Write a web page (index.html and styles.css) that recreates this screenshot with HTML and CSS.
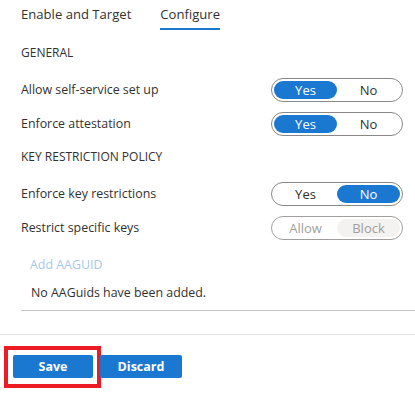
FILE: index.html
```html
<!DOCTYPE html>
<html>
<head>
<meta charset="utf-8">
<link rel="stylesheet" href="styles.css">
</head>
<body>
<div class="page">
  <div class="tabs">
    <div class="tab">Enable and Target</div>
    <div class="tab active">Configure</div>
  </div>
  <div class="content">
    <div class="section-title first">GENERAL</div>
    <div class="row first-row">
      <div class="label">Allow self-service set up</div>
      <div class="toggle"><span class="seg on">Yes</span><span class="seg">No</span></div>
    </div>
    <div class="row">
      <div class="label">Enforce attestation</div>
      <div class="toggle"><span class="seg on">Yes</span><span class="seg">No</span></div>
    </div>
    <div class="section-title">KEY RESTRICTION POLICY</div>
    <div class="row first-row">
      <div class="label">Enforce key restrictions</div>
      <div class="toggle"><span class="seg">Yes</span><span class="seg on">No</span></div>
    </div>
    <div class="row">
      <div class="label">Restrict specific keys</div>
      <div class="toggle disabled"><span class="seg">Allow</span><span class="seg on">Block</span></div>
    </div>
    <div class="add-link">Add AAGUID</div>
    <div class="empty">No AAGuids have been added.</div>
    <div class="divider"></div>
  </div>
  <div class="footer">
    <div class="highlight"><button class="btn save">Save</button></div>
    <button class="btn discard">Discard</button>
  </div>
</div>
</body>
</html>
```

FILE: styles.css
```css
html, body {
  margin: 0;
  padding: 0;
  background: #ffffff;
}
body {
  font-family: "Open Sans", "Noto Sans", sans-serif;
  color: #323130;
  font-size: 12.4px;
}
.page {
  width: 415px;
}
.tabs {
  display: flex;
  gap: 29px;
  padding-left: 21px;
  height: 30px;
}
.tab {
  font-size: 13.1px;
  line-height: 20px;
  padding-top: 4px;
  padding-bottom: 4px;
  border-bottom: 2px solid transparent;
  color: #323130;
}
.tab.active {
  border-bottom-color: #1b78d0;
}
.content {
  padding-left: 21px;
  padding-right: 12px;
}
.section-title {
  line-height: 20px;
  font-size: 12px;
  margin-top: 11px;
}
.section-title.first {
  margin-top: 13px;
}
.row {
  display: flex;
  align-items: center;
  justify-content: space-between;
  height: 24px;
  margin-top: 10px;
}
.row.first-row {
  margin-top: 15px;
}
.label {
  line-height: 20px;
}
.toggle {
  display: flex;
  box-sizing: border-box;
  width: 132px;
  height: 24px;
  border: 1px solid #8a8886;
  border-radius: 12px;
  padding: 2px;
}
.seg {
  flex: 1;
  display: flex;
  align-items: center;
  justify-content: center;
  border-radius: 9px;
  color: #323130;
  font-size: 13px;
}
.seg.on {
  background: #1b78d0;
  color: #ffffff;
}
.toggle.disabled {
  border-color: #a19f9d;
}
.toggle.disabled .seg {
  color: #a19f9d;
}
.toggle.disabled .seg.on {
  background: #f3f2f1;
  color: #a19f9d;
}
.add-link {
  margin-top: 15px;
  line-height: 20px;
  padding-left: 9px;
  color: #a6c8ea;
}
.empty {
  margin-top: 8px;
  line-height: 20px;
  padding-left: 10px;
}
.divider {
  margin-top: 7px;
  margin-right: -12px;
  height: 1px;
  background: #c8c6c4;
}
.footer {
  margin-top: 23px;
  border-top: 1px solid #e1dfdd;
  padding: 11px 0 0 4px;
  display: flex;
  align-items: flex-start;
}
.highlight {
  display: flex;
  border: 4px solid #ed1c24;
  padding: 5px 4px 6px 5px;
}
.btn {
  height: 23px;
  border: none;
  border-radius: 2px;
  background: #1b78d0;
  color: #ffffff;
  font-family: "Open Sans", "Noto Sans", sans-serif;
  font-weight: 700;
  font-size: 12.5px;
  padding: 0;
  width: 82px;
}
.btn.save {
  width: 80px;
}
.btn.discard {
  margin-top: 9px;
  margin-left: -1px;
}
```
